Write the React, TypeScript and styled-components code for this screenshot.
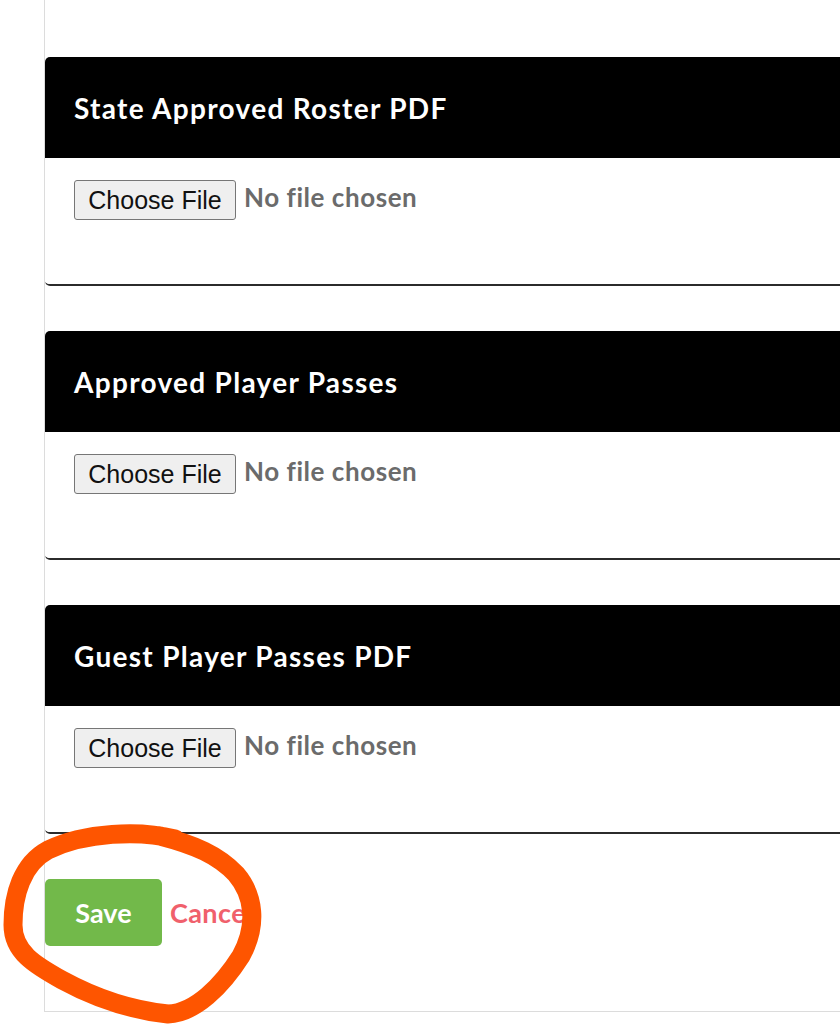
import styled, { createGlobalStyle } from 'styled-components';

const GlobalStyle = createGlobalStyle`
  html, body {
    margin: 0;
    padding: 0;
    background: #fff;
    overflow: hidden;
  }
  body {
    font-family: Lato, "Open Sans", sans-serif;
  }
`;

const uploads = [
  'State Approved Roster PDF',
  'Approved Player Passes',
  'Guest Player Passes PDF',
];

const App = () => {
  return (
    <>
      <GlobalStyle />
      <Page>
        {uploads.map((title) => (
          <Card key={title}>
            <CardHeader>{title}</CardHeader>
            <CardBody>
              <FileField>
                <ChooseButton type="button">Choose File</ChooseButton>
                <NoFile>No file chosen</NoFile>
              </FileField>
            </CardBody>
          </Card>
        ))}
        <Actions>
          <SaveButton type="button">Save</SaveButton>
          <CancelLink href="#">Cancel</CancelLink>
        </Actions>
      </Page>
      <Scribble viewBox="0 0 840 1024" width="840" height="1024">
        <path
          d="M 175 839 C 140 830, 85 832, 48 850 C 22 864, 13 895, 13 925 C 13 952, 35 965, 62 980 C 95 998, 130 1010, 168 1014 C 195 1013, 222 986, 241 956 C 258 925, 254 895, 236 874 C 218 855, 195 845, 160 836"
          fill="none"
          stroke="#fe5500"
          strokeWidth="19"
          strokeLinecap="round"
          strokeLinejoin="round"
        />
      </Scribble>
    </>
  );
};

export default App;

const Page = styled.div`
  margin-left: 44px;
  width: 1200px;
  padding-top: 57px;
  padding-bottom: 65px;
  border-left: 1px solid #dcdcdc;
  border-bottom: 1px solid #dcdcdc;
`;

const Card = styled.section`
  border-radius: 5px;
  border-bottom: 2px solid #2b2b2b;
  overflow: hidden;

  & + & {
    margin-top: 45px;
  }
`;

const CardHeader = styled.h3`
  margin: 0;
  height: 101px;
  display: flex;
  align-items: center;
  padding-left: 29px;
  background: #000;
  color: #fff;
  font-size: 28px;
  font-weight: 700;
  letter-spacing: 1.3px;
`;

const CardBody = styled.div`
  box-sizing: border-box;
  height: 126px;
  padding: 22px 29px 0;
  background: #fff;
`;

const FileField = styled.div`
  display: flex;
  align-items: center;
  gap: 8px;
`;

const ChooseButton = styled.button`
  box-sizing: border-box;
  width: 162px;
  height: 40px;
  padding: 0;
  background: #efefef;
  border: 1px solid #767676;
  border-radius: 3px;
  color: #111;
  font-family: "Liberation Sans", Arial, sans-serif;
  font-size: 25px;
`;

const NoFile = styled.span`
  padding-bottom: 6px;
  color: #6b6b6b;
  font-size: 26px;
  font-weight: 700;
  letter-spacing: 0.55px;
`;

const Actions = styled.div`
  display: flex;
  align-items: center;
  gap: 8px;
  margin-top: 45px;
`;

const SaveButton = styled.button`
  width: 117px;
  height: 67px;
  border: none;
  border-radius: 5px;
  background: #72b94a;
  color: #fff;
  font-family: Lato, sans-serif;
  font-size: 27px;
  font-weight: 700;
`;

const CancelLink = styled.a`
  color: #f0606c;
  font-size: 27px;
  font-weight: 700;
  letter-spacing: 0.4px;
  text-decoration: none;
`;

const Scribble = styled.svg`
  position: absolute;
  top: 0;
  left: 0;
  pointer-events: none;
`;
